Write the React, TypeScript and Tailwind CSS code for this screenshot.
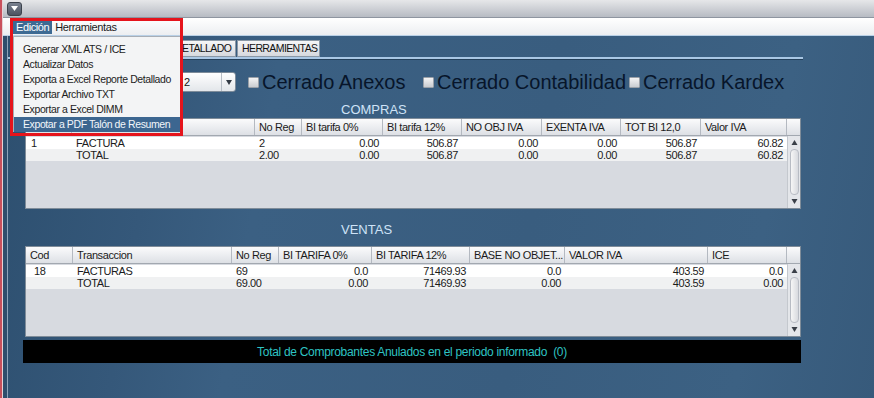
import React from "react";

type Col = { label: string; w: string; right?: boolean; pad?: string };

const comprasCols: Col[] = [
  { label: "", w: "w-[46px]", pad: "pl-[5px]" },
  { label: "", w: "w-[183px]" },
  { label: "No Reg", w: "w-[47px]" },
  { label: "BI tarifa 0%", w: "w-[81px]", right: true },
  { label: "BI tarifa 12%", w: "w-[79px]", right: true },
  { label: "NO OBJ IVA", w: "w-[80px]", right: true },
  { label: "EXENTA IVA", w: "w-[79px]", right: true },
  { label: "TOT BI 12,0", w: "w-[80px]", right: true },
  { label: "Valor IVA", w: "w-[86px]", right: true },
];

const comprasRows = [
  ["1", "FACTURA", "2", "0.00", "506.87", "0.00", "0.00", "506.87", "60.82"],
  ["", "TOTAL", "2.00", "0.00", "506.87", "0.00", "0.00", "506.87", "60.82"],
];

const ventasCols: Col[] = [
  { label: "Cod", w: "w-[47px]", pad: "pl-[8px]" },
  { label: "Transaccion", w: "w-[159px]" },
  { label: "No Reg", w: "w-[47px]" },
  { label: "BI TARIFA 0%", w: "w-[93px]", right: true },
  { label: "BI TARIFA 12%", w: "w-[98px]", right: true },
  { label: "BASE NO OBJET...", w: "w-[95px]", right: true },
  { label: "VALOR IVA", w: "w-[143px]", right: true },
  { label: "ICE", w: "w-[79px]", right: true },
];

const ventasRows = [
  ["18", "FACTURAS", "69", "0.0", "71469.93", "0.0", "403.59", "0.0"],
  ["", "TOTAL", "69.00", "0.00", "71469.93", "0.00", "403.59", "0.00"],
];

const menuItems = [
  "Generar XML ATS / ICE",
  "Actualizar Datos",
  "Exporta a Excel Reporte Detallado",
  "Exportar Archivo TXT",
  "Exportar a Excel DIMM",
  "Expotar a PDF Talón de Resumen",
];

function ScrollBar() {
  return (
    <div className="w-[13px] flex flex-col items-center bg-[#e4e6ea] border-l border-[#c4c8ce] py-[2px]">
      <svg width="7" height="7" viewBox="0 0 7 7" className="mt-[1px]">
        <path d="M3.5 1 L6.5 6 L0.5 6 Z" fill="#3a3f48" />
      </svg>
      <div className="flex-1 w-[9px] my-[3px] rounded-[4px] border border-[#b8bcc4] bg-gradient-to-r from-[#f6f6f6] to-[#d8dadf]" />
      <svg width="7" height="7" viewBox="0 0 7 7" className="mb-[1px]">
        <path d="M0.5 1 L6.5 1 L3.5 6 Z" fill="#3a3f48" />
      </svg>
    </div>
  );
}

function DataTable({ cols, rows }: { cols: Col[]; rows: string[][] }) {
  return (
    <div className="ml-[17px] w-[776px] h-[91px] border border-[#7f8c99] bg-[#d7dae0] flex flex-col text-[11px] tracking-[-0.4px] text-[#1b1b1b]">
      <div className="flex h-[17px] bg-gradient-to-b from-[#fbfbfc] to-[#dde0e5] border-b border-[#a2a8b0]">
        {cols.map((c, i) => (
          <div key={i} className={`${c.w} border-r border-[#b4b9c1] pl-[4px] leading-[16px] whitespace-nowrap overflow-hidden`}>
            {c.label}
          </div>
        ))}
        <div className="w-[13px]" />
      </div>
      <div className="flex flex-1">
        <div className="flex-1 flex flex-col">
          {rows.map((r, i) => (
            <div key={i} className={`flex h-[12px] leading-[12px] ${i === 0 ? "bg-white mt-[1px]" : "bg-[#f0f1f2]"}`}>
              {cols.map((c, j) => (
                <div
                  key={j}
                  className={`${c.w} whitespace-nowrap overflow-hidden ${c.right ? "text-right pr-[4px]" : c.pad ?? "pl-[4px]"}`}
                >
                  {r[j]}
                </div>
              ))}
            </div>
          ))}
        </div>
        <ScrollBar />
      </div>
    </div>
  );
}

function Check({ label, w }: { label: string; w: string }) {
  return (
    <div className="flex items-center">
      <div className="w-[11px] h-[11px] mt-[1px] rounded-[1px] border border-[#9aa0a8] bg-gradient-to-b from-[#f4f4f4] to-[#c9ccd1]" />
      <span className={`${w} pl-[3px] text-[20px] leading-[22px] text-[#07152a] font-['Comic_Sans_MS','Liberation_Sans',sans-serif] whitespace-nowrap`}>
        {label}
      </span>
    </div>
  );
}

export default function App() {
  return (
    <div className="relative w-[874px] h-[398px] flex overflow-hidden font-['Liberation_Sans',Arial,sans-serif]">
      <div className="w-[2px] bg-[#c9505c]" />
      <div className="w-[1px] bg-[#e6d2d6]" />
      <div className="flex-1 flex flex-col">
        {/* window title strip */}
        <div className="h-[18px] flex items-center pl-[4px] bg-gradient-to-b from-[#e6e7e9] to-[#b7bbc3] border-b border-[#8e95a0]">
          <div className="w-[15px] h-[14px] rounded-[3px] border border-[#3c424c] bg-gradient-to-b from-[#7a8290] to-[#4c5361] flex items-center justify-center">
            <svg width="7" height="5" viewBox="0 0 7 5">
              <path d="M0 0 L7 0 L3.5 5 Z" fill="#ffffff" />
            </svg>
          </div>
        </div>
        {/* menu bar */}
        <div className="h-[18px] flex items-center pl-[10px] pt-[1px] bg-gradient-to-b from-[#ffffff] to-[#eceef1] border-b border-[#b9d0e6] text-[11px] tracking-[-0.4px] text-[#1a1a1a]">
          <span className="px-[3px] h-[14px] leading-[14px] bg-[#3d6a93] text-white">Edición</span>
          <span className="px-[3px] leading-[14px]">Herramientas</span>
        </div>
        {/* content */}
        <div className="flex-1 flex bg-[linear-gradient(100deg,#2d4f6f_0%,#35587a_18%,#3b6083_30%,#395d7f_60%,#3c6183_85%,#375a7b_100%)]">
          <div className="w-[4px] bg-[#2f4e6c]" />
          <div className="w-[1px] bg-[#8da3b9]" />
          <div className="flex-1 flex flex-col">
            {/* tabs */}
            <div className="flex mt-[4px] h-[17px] ml-[2px] text-[10.5px] tracking-[-0.6px] text-[#111]">
              <div className="w-[161px] bg-gradient-to-b from-[#ffffff] to-[#dfe2e6] border border-[#8a98a6]" />
              <div className="w-[65px] bg-gradient-to-b from-[#f6f6f7] to-[#d6d9de] border border-[#8a98a6] border-l-0 pl-[4px] leading-[15px] whitespace-nowrap overflow-hidden">DETALLADO</div>
              <div className="w-[83px] ml-[1px] bg-gradient-to-b from-[#f6f6f7] to-[#d6d9de] border border-[#8a98a6] pl-[4px] leading-[15px] whitespace-nowrap overflow-hidden">HERRAMIENTAS</div>
            </div>
            <div className="w-[795px] h-[3px] bg-[#a9c7e4] border-b border-[#24405a]" />

            {/* filters row */}
            <div className="flex items-center mt-[11px] h-[22px]">
              <div className="ml-[152px] w-[76px] h-[20px] rounded-[3px] border border-[#7e8c9a] bg-gradient-to-b from-[#ffffff] to-[#e3e6ea] flex items-center text-[11px] text-[#111]">
                <span className="flex-1 pl-[23px]">2</span>
                <div className="w-[14px] h-full border-l border-[#b8bec6] flex items-center justify-center">
                  <svg width="6" height="5" viewBox="0 0 6 5">
                    <path d="M0 0 L6 0 L3 5 Z" fill="#333a44" />
                  </svg>
                </div>
              </div>
              <div className="ml-[12px] flex items-center">
                <Check label="Cerrado Anexos" w="w-[164px]" />
                <Check label="Cerrado Contabilidad" w="w-[195px]" />
                <Check label="Cerrado Kardex" w="w-[150px]" />
              </div>
            </div>

            <div className="mt-[9px] h-[16px] ml-[333px] text-[13px] leading-[16px] text-[#cfe3f7] font-['Comic_Sans_MS','Liberation_Sans',sans-serif]">
              COMPRAS
            </div>
            <DataTable cols={comprasCols} rows={comprasRows} />

            <div className="mt-[12px] h-[17px] ml-[333px] text-[13px] leading-[17px] text-[#cfe3f7] font-['Comic_Sans_MS','Liberation_Sans',sans-serif]">
              VENTAS
            </div>
            <div className="mt-[8px]">
              <DataTable cols={ventasCols} rows={ventasRows} />
            </div>

            <div className="mt-[3px] ml-[15px] w-[778px] h-[23px] bg-black flex items-center justify-center text-[12px] tracking-[-0.3px] text-[#2ec3c3] font-['Comic_Sans_MS','Liberation_Sans',sans-serif]">
              Total de Comprobantes Anulados en el periodo informado&nbsp;&nbsp;(0)
            </div>
          </div>
        </div>
      </div>

      {/* open dropdown menu */}
      <div className="absolute left-[13px] top-[36px] w-[168px] h-[96px] bg-[#f3f4f5] border border-[#a7aeb6] pt-[5px] text-[10.5px] tracking-[-0.4px] text-[#1d1d1d]">
        {menuItems.map((m, i) => (
          <div
            key={m}
            className={`h-[15px] leading-[15px] pl-[9px] whitespace-nowrap ${i === menuItems.length - 1 ? "bg-[#3c6690] text-[#f2f6fa]" : ""}`}
          >
            {m}
          </div>
        ))}
      </div>
      {/* annotation frame */}
      <div className="absolute left-[10px] top-[18px] w-[173px] h-[118px] border-[3px] border-[#e5141c] pointer-events-none" />
    </div>
  );
}
